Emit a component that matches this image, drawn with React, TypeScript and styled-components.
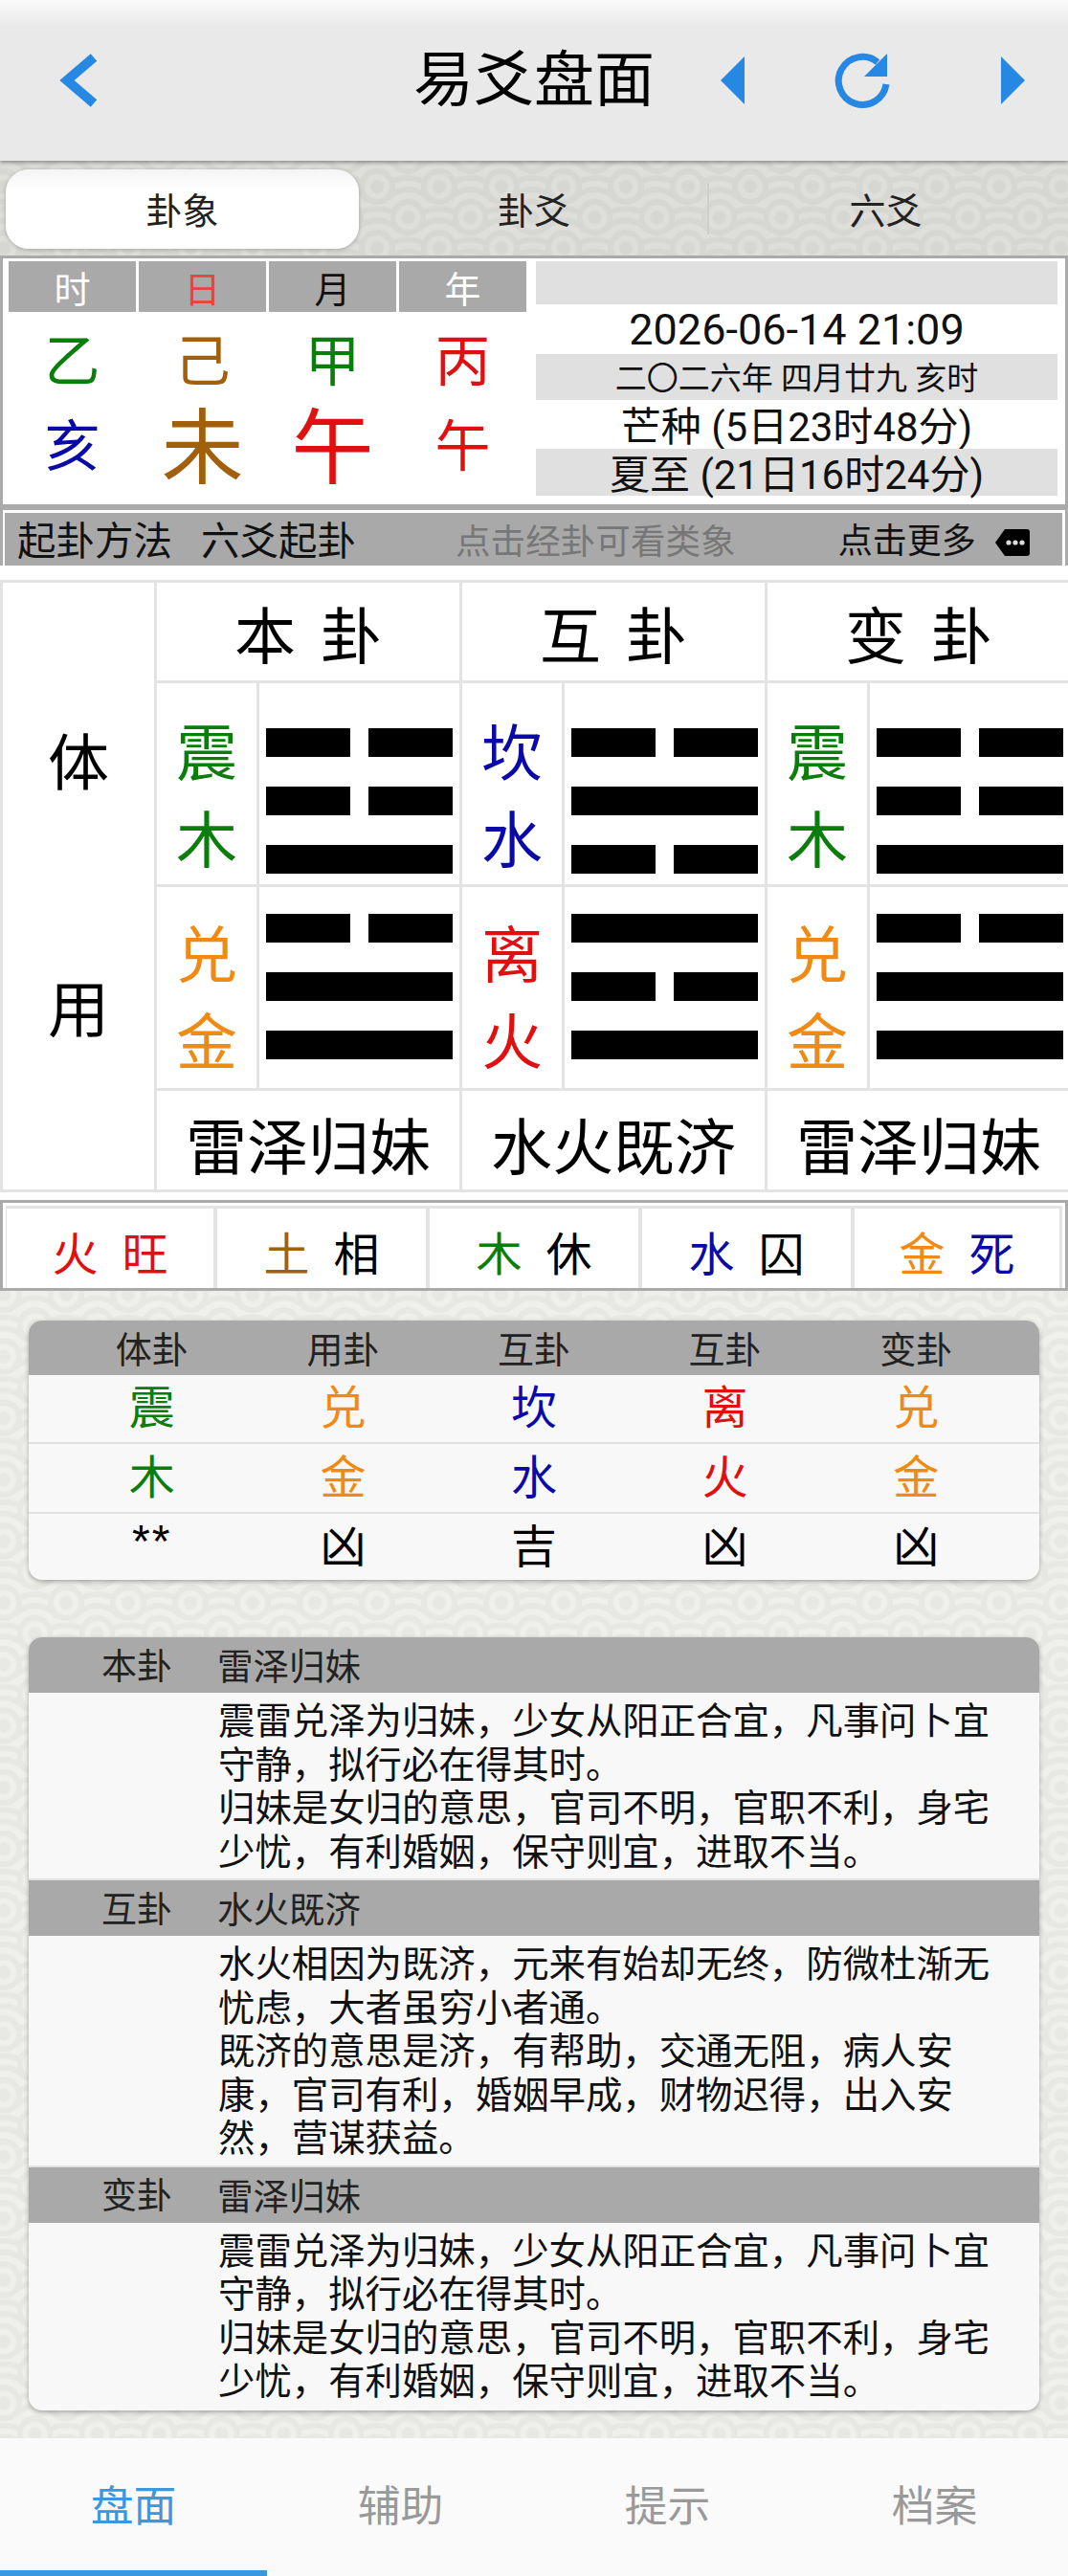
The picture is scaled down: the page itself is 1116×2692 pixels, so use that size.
import React from "react";
import styled, { createGlobalStyle } from "styled-components";

const Global = createGlobalStyle`
  html, body { margin: 0; padding: 0; background: #fff; }
  * { box-sizing: border-box; }
`;

const C = { wood: "#0a7d0a", fire: "#e01010", earth: "#a3600c", metal: "#ef8a14", water: "#0a0aa8", ink: "#000" };
const SANS = `Roboto, "Noto Sans CJK SC", sans-serif`;
const GREY = "#a9a9a9";
const LINE = "#e3e3e3";

/* wave backdrop: one tile, every ring set that reaches into it, computed once */
const TILE_W = 65;
const TILE_H = 64.35;
const DARK = "#e7e7e3";
const LIGHT = "#efefeb";
const ring = (cx: number, cy: number, stops: number[]) => {
  const parts: string[] = [];
  let from = 0;
  stops.forEach((to, i) => {
    const col = i % 2 === 0 ? DARK : LIGHT;
    parts.push(`${col} ${from === 0 ? 0 : from + 1}px`, `${col} ${to - 1}px`);
    from = to;
  });
  const last = i2c(stops.length - 1);
  parts.push(`${last} ${from}px`, `transparent ${from}px`);
  return `radial-gradient(circle at ${cx}px ${cy}px, ${parts.join(", ")})`;
};
function i2c(i: number) {
  return i % 2 === 0 ? DARK : LIGHT;
}
const buildWaves = () => {
  const layers: string[] = [];
  const core = [7, 13, 19];
  const fan = [7, 13, 19, 26, 32, 38, 44, 50];
  const A = [4, 2];
  const B = [36.5, 34.2];
  for (let row = -1; row <= 2; row++) {
    for (let col = -1; col <= 1; col++) {
      layers.push(ring(A[0] + col * TILE_W, A[1] + row * TILE_H, core));
      layers.push(ring(B[0] + col * TILE_W, B[1] + row * TILE_H, core));
    }
  }
  for (let step = 8; step >= -4; step--) {
    const odd = Math.abs(step) % 2 === 1;
    const y = (odd ? B[1] : A[1]) + ((step - (odd ? 1 : 0)) / 2) * TILE_H;
    for (let col = -1; col <= 2; col++) {
      const x = (odd ? B[0] : A[0]) + col * TILE_W;
      layers.push(ring(x, y, fan));
    }
  }
  return layers.join(",\n");
};
const WAVES = buildWaves();

const Page = styled.div`
  width: 1116px;
  height: 2692px;
  overflow: hidden;
  display: flex;
  flex-direction: column;
  font-family: ${SANS};
  color: #000;
  background-color: ${DARK};
  background-image: ${WAVES};
  background-size: ${TILE_W}px ${TILE_H}px;
`;

/* ---------- header ---------- */
const Header = styled.header`
  flex: none;
  height: 168px;
  display: flex;
  align-items: center;
  background: linear-gradient(#fafafa 0, #e9e9e9 28px);
  box-shadow: 0 2px 4px rgba(0, 0, 0, 0.35);
  position: relative;
  z-index: 2;
`;
const HeaderIcon = styled.svg<{ $ml: number }>`
  flex: none;
  margin-left: ${(p) => p.$ml}px;
  display: block;
`;
const Title = styled.h1`
  flex: none;
  width: 252px;
  margin: 0 0 0 327px;
  font-size: 63px;
  line-height: 70px;
  font-weight: 400;
  text-align: center;
  white-space: nowrap;
`;

/* ---------- tabs ---------- */
const Tabs = styled.nav`
  flex: none;
  height: 99px;
  padding: 9px 6px 7px;
  display: grid;
  grid-template-columns: 369px 366px 369px;
  background: rgba(0, 0, 0, 0.07);
`;
const Tab = styled.div<{ $active?: boolean; $divider?: boolean }>`
  position: relative;
  display: flex;
  align-items: center;
  justify-content: center;
  padding-bottom: 2px;
  font-size: 38px;
  color: #222;
  border-radius: 24px;
  background: ${(p) => (p.$active ? "linear-gradient(#f4f4f4, #fff 22px)" : "transparent")};
  box-shadow: ${(p) => (p.$active ? "0 1px 4px rgba(0,0,0,.25)" : "none")};
  &::after {
    content: "";
    display: ${(p) => (p.$divider ? "block" : "none")};
    position: absolute;
    right: 0;
    top: 14px;
    bottom: 15px;
    width: 2px;
    background: #cfcecb;
  }
`;

/* ---------- calendar ---------- */
const WhitePanel = styled.div`
  flex: none;
  background: #fff;
`;
const Calendar = styled.section`
  height: 263px;
  border: 3px solid #aaa;
  padding: 3px 8px 0 6px;
  display: flex;
  gap: 9px;
`;
const Pillars = styled.div`
  flex: none;
  display: grid;
  grid-template-columns: repeat(4, 133px);
  grid-template-rows: 53px 104px 74px;
  column-gap: 3px;
  width: 542px;
`;
const PillarHead = styled.div<{ $color: string }>`
  background: ${GREY};
  color: ${(p) => p.$color};
  display: flex;
  align-items: center;
  justify-content: center;
  font-size: 38px;
`;
const Ganzhi = styled.div<{ $color: string; $big?: boolean }>`
  display: flex;
  align-items: center;
  justify-content: center;
  padding-top: ${(p) => (p.$big ? 6 : 0)}px;
  color: ${(p) => p.$color};
  font-size: ${(p) => (p.$big ? 86 : 58)}px;
  line-height: 1;
`;
const DateCol = styled.div`
  flex: 1;
  display: flex;
  flex-direction: column;
`;
const DateRow = styled.div<{ $h: number; $shade?: boolean; $size: number; $pb?: number }>`
  height: ${(p) => p.$h}px;
  padding-bottom: ${(p) => p.$pb ?? 0}px;
  background: ${(p) => (p.$shade ? "#e0e0e0" : "transparent")};
  font-size: ${(p) => p.$size}px;
  display: flex;
  align-items: center;
  justify-content: center;
  white-space: nowrap;
  color: #111;
`;

/* ---------- method bar ---------- */
const Bar = styled.div`
  height: 61px;
  border: 3px solid #aaa;
  border-bottom: 0;
  padding: 3px 3px 0 2px;
`;
const BarInner = styled.div`
  height: 55px;
  padding-top: 6px;
  background: ${GREY};
  display: flex;
  align-items: center;
  white-space: nowrap;
  overflow: hidden;
`;
const BarText = styled.span<{ $ml: number; $size: number; $muted?: boolean }>`
  margin-left: ${(p) => p.$ml}px;
  font-size: ${(p) => p.$size}px;
  color: ${(p) => (p.$muted ? "#777" : "#111")};
  line-height: 49px;
`;
const MoreIcon = styled.svg`
  margin-left: 20px;
  flex: none;
`;

/* ---------- hexagram table ---------- */
const HexTable = styled.section`
  margin-top: 15px;
  height: 640px;
  width: 1122px;
  display: flex;
  border: 3px solid ${LINE};
  border-right: 0;
`;
const SideCol = styled.div`
  flex: none;
  width: 158px;
  padding-top: 4px;
  display: flex;
  flex-direction: column;
  align-items: center;
  justify-content: center;
  gap: 194px;
  font-size: 64px;
  line-height: 64px;
`;
const HexCol = styled.div`
  flex: none;
  width: 319px;
  border-left: 3px solid ${LINE};
  display: flex;
  flex-direction: column;
`;
const HexTitle = styled.div`
  flex: none;
  height: 105px;
  display: flex;
  align-items: center;
  justify-content: center;
  font-size: 64px;
  word-spacing: 10px;
  border-bottom: 3px solid ${LINE};
`;
const TrigramRow = styled.div`
  flex: none;
  height: 213px;
  display: flex;
  border-bottom: 3px solid ${LINE};
`;
const TrigramName = styled.div<{ $pt: number }>`
  flex: none;
  width: 107px;
  padding-top: ${(p) => p.$pt}px;
  border-right: 3px solid ${LINE};
  display: flex;
  flex-direction: column;
  align-items: center;
  font-size: 64px;
  line-height: 91px;
`;
const TrigramLines = styled.div<{ $pt: number }>`
  padding: ${(p) => p.$pt}px 0 0 7px;
  display: flex;
  flex-direction: column;
  gap: 31px;
`;
const Yao = styled.div<{ $broken: boolean }>`
  width: 195px;
  height: 30px;
  display: flex;
  justify-content: space-between;
  background: ${(p) => (p.$broken ? "transparent" : "#000")};
`;
const YaoPart = styled.i`
  width: 88px;
  background: #000;
`;
const HexName = styled.div`
  flex: 1;
  padding-top: 5px;
  display: flex;
  align-items: center;
  justify-content: center;
  font-size: 64px;
  white-space: nowrap;
`;

/* ---------- wang-shuai row ---------- */
const WangRow = styled.section`
  margin-top: 8px;
  height: 95px;
  border: 3px solid #aaa;
  padding: 3px 3px 0;
  display: grid;
  grid-template-columns: 220px repeat(3, 222px) 1fr;
`;
const WangCell = styled.div`
  display: flex;
  align-items: center;
  justify-content: center;
  gap: 25px;
  padding-top: 5px;
  font-size: 48px;
  border-top: 3px solid ${LINE};
  border-right: 3px solid ${LINE};
  border-left: 1px solid ${LINE};
`;
const Tone = styled.span<{ $color: string }>`
  color: ${(p) => p.$color};
`;

/* ---------- cards ---------- */
const Card = styled.section<{ $mt: number }>`
  flex: none;
  margin: ${(p) => p.$mt}px 30px 0;
  background: #f8f8f8;
  border-radius: 14px;
  overflow: hidden;
  box-shadow: 0 2px 5px rgba(0, 0, 0, 0.3);
`;
const SummaryHead = styled.div`
  height: 57px;
  background: ${GREY};
  padding: 0 29px 6px;
  display: grid;
  grid-template-columns: repeat(5, 1fr);
  align-items: center;
  text-align: center;
  font-size: 38px;
  color: #222;
`;
const SummaryRow = styled.div<{ $h: number; $line?: boolean }>`
  height: ${(p) => p.$h}px;
  padding: 0 29px;
  display: grid;
  grid-template-columns: repeat(5, 1fr);
  align-items: center;
  text-align: center;
  font-size: 48px;
  line-height: 60px;
  border-bottom: ${(p) => (p.$line ? "2px solid #e2e2e2" : "0")};
`;
const Stars = styled.span`
  font-family: "Liberation Sans", sans-serif;
  letter-spacing: 2px;
  position: relative;
  top: -6px;
`;
const InfoHead = styled.div`
  height: 58px;
  padding-bottom: 5px;
  background: ${GREY};
  display: grid;
  grid-template-columns: 150px 1fr;
  column-gap: 47px;
  align-items: center;
  font-size: 37.5px;
  color: #222;
`;
const InfoLabel = styled.span`
  text-align: right;
  font-size: 37px;
`;
const InfoBody = styled.div`
  padding: 7px 44px 5px 198px;
  font-size: 38.4px;
  line-height: 45.5px;
  color: #111;
  border-bottom: 2px solid #e2e2e2;
  &:last-child {
    border-bottom: 0;
    padding-bottom: 7px;
  }
`;

/* ---------- footer ---------- */
const Footer = styled.footer`
  margin-top: auto;
  flex: none;
  height: 144px;
  background: #fafafa;
  display: grid;
  grid-template-columns: repeat(4, 1fr);
`;
const FootTab = styled.div<{ $active?: boolean }>`
  display: flex;
  align-items: center;
  justify-content: center;
  padding-bottom: 4px;
  font-size: 44.8px;
  color: ${(p) => (p.$active ? "#3a98e0" : "#999")};
  border-bottom: 6px solid ${(p) => (p.$active ? "#3a98e0" : "transparent")};
`;

/* ---------- data ---------- */
const pillarHeads: [string, string][] = [["时", "#fff"], ["日", "#e8433f"], ["月", "#111"], ["年", "#fff"]];
const stems: [string, string][] = [["乙", C.wood], ["己", C.earth], ["甲", C.wood], ["丙", C.fire]];
const branches: [string, string, boolean][] = [["亥", C.water, false], ["未", C.earth, true], ["午", C.fire, true], ["午", C.fire, false]];

type Tri = { n: string; e: string; c: string; lines: boolean[] };
const zhen: Tri = { n: "震", e: "木", c: C.wood, lines: [true, true, false] };
const dui: Tri = { n: "兑", e: "金", c: C.metal, lines: [true, false, false] };
const kan: Tri = { n: "坎", e: "水", c: C.water, lines: [true, false, true] };
const li: Tri = { n: "离", e: "火", c: C.fire, lines: [false, true, false] };

const hexes = [
  { title: "本 卦", up: zhen, down: dui, name: "雷泽归妹" },
  { title: "互 卦", up: kan, down: li, name: "水火既济" },
  { title: "变 卦", up: zhen, down: dui, name: "雷泽归妹" },
];

const wang: [string, string, string, string][] = [
  ["火", C.fire, "旺", C.fire],
  ["土", C.earth, "相", C.ink],
  ["木", C.wood, "休", C.ink],
  ["水", C.water, "囚", C.ink],
  ["金", C.metal, "死", C.water],
];

const summary = [
  { head: "体卦", a: "震", ac: C.wood, b: "木", bc: C.wood, r: "**" },
  { head: "用卦", a: "兑", ac: C.metal, b: "金", bc: C.metal, r: "凶" },
  { head: "互卦", a: "坎", ac: C.water, b: "水", bc: C.water, r: "吉" },
  { head: "互卦", a: "离", ac: C.fire, b: "火", bc: C.fire, r: "凶" },
  { head: "变卦", a: "兑", ac: C.metal, b: "金", bc: C.metal, r: "凶" },
];

const guiMei = ["震雷兑泽为归妹，少女从阳正合宜，凡事问卜宜守静，拟行必在得其时。", "归妹是女归的意思，官司不明，官职不利，身宅少忧，有利婚姻，保守则宜，进取不当。"];
const info = [
  { label: "本卦", name: "雷泽归妹", text: guiMei },
  {
    label: "互卦",
    name: "水火既济",
    text: ["水火相因为既济，元来有始却无终，防微杜渐无忧虑，大者虽穷小者通。", "既济的意思是济，有帮助，交通无阻，病人安康，官司有利，婚姻早成，财物迟得，出入安然，营谋获益。"],
  },
  { label: "变卦", name: "雷泽归妹", text: guiMei },
];

const BLUE = "#2688e3";

const Trigram = ({ t, namePt, linePt }: { t: Tri; namePt: number; linePt: number }) => (
  <TrigramRow>
    <TrigramName $pt={namePt} style={{ color: t.c }}>
      <span>{t.n}</span>
      <span>{t.e}</span>
    </TrigramName>
    <TrigramLines $pt={linePt}>
      {t.lines.map((broken, i) => (
        <Yao key={i} $broken={broken}>
          {broken && <YaoPart />}
          {broken && <YaoPart />}
        </Yao>
      ))}
    </TrigramLines>
  </TrigramRow>
);

export default function App() {
  return (
    <Page>
      <Global />
      <Header>
        <HeaderIcon $ml={60} width="45" height="60" viewBox="0 0 45 60">
          <path d="M38 6 L10 30 L38 54" fill="none" stroke={BLUE} strokeWidth="10" strokeLinejoin="miter" />
        </HeaderIcon>
        <Title>易爻盘面</Title>
        <HeaderIcon $ml={69} width="26" height="50" viewBox="0 0 26 50">
          <path d="M25 0 V50 L0 25 Z" fill={BLUE} />
        </HeaderIcon>
        <HeaderIcon $ml={91} width="60" height="60" viewBox="0 0 60 60">
          <path d="M56 34 A25 25 0 1 1 47 11" fill="none" stroke={BLUE} strokeWidth="7" />
          <path d="M57 2 V26 H33 Z" fill={BLUE} />
        </HeaderIcon>
        <HeaderIcon $ml={115} width="26" height="50" viewBox="0 0 26 50">
          <path d="M1 0 V50 L26 25 Z" fill={BLUE} />
        </HeaderIcon>
      </Header>

      <Tabs>
        <Tab $active>卦象</Tab>
        <Tab $divider>卦爻</Tab>
        <Tab>六爻</Tab>
      </Tabs>

      <WhitePanel>
        <Calendar>
          <Pillars>
            {pillarHeads.map(([t, c]) => (
              <PillarHead key={t} $color={c}>{t}</PillarHead>
            ))}
            {stems.map(([t, c]) => (
              <Ganzhi key={t} $color={c}>{t}</Ganzhi>
            ))}
            {branches.map(([t, c, big], i) => (
              <Ganzhi key={i} $color={c} $big={big}>{t}</Ganzhi>
            ))}
          </Pillars>
          <DateCol>
            <DateRow $h={45} $size={38} $shade />
            <DateRow $h={52} $size={45}>2026-06-14 21:09</DateRow>
            <DateRow $h={48} $shade $size={33} $pb={3}>二〇二六年 四月廿九 亥时</DateRow>
            <DateRow $h={51} $size={42} $pb={2}>芒种 (5日23时48分)</DateRow>
            <DateRow $h={49} $shade $size={42} $pb={2}>夏至 (21日16时24分)</DateRow>
          </DateCol>
        </Calendar>

        <Bar>
          <BarInner>
            <BarText $ml={13} $size={40.5}>起卦方法</BarText>
            <BarText $ml={30} $size={40.5}>六爻起卦</BarText>
            <BarText $ml={104} $size={36.6} $muted>点击经卦可看类象</BarText>
            <BarText $ml={107} $size={36}>点击更多</BarText>
            <MoreIcon width="36" height="28" viewBox="0 0 36 28">
              <path d="M10 0 H33 Q36 0 36 3 V25 Q36 28 33 28 H10 L0 14 Z" fill="#000" />
              <circle cx="14" cy="14" r="2.6" fill="#ddd" />
              <circle cx="21" cy="14" r="2.6" fill="#ddd" />
              <circle cx="28" cy="14" r="2.6" fill="#ddd" />
            </MoreIcon>
          </BarInner>
        </Bar>

        <HexTable>
          <SideCol>
            <span>体</span>
            <span>用</span>
          </SideCol>
          {hexes.map((h) => (
            <HexCol key={h.title}>
              <HexTitle>{h.title}</HexTitle>
              <Trigram t={h.up} namePt={29} linePt={47} />
              <Trigram t={h.down} namePt={27} linePt={28} />
              <HexName>{h.name}</HexName>
            </HexCol>
          ))}
        </HexTable>

        <WangRow>
          {wang.map(([a, ac, b, bc]) => (
            <WangCell key={a}>
              <Tone $color={ac}>{a}</Tone>
              <Tone $color={bc}>{b}</Tone>
            </WangCell>
          ))}
        </WangRow>
      </WhitePanel>

      <Card $mt={31}>
        <SummaryHead>
          {summary.map((s, i) => (
            <span key={i}>{s.head}</span>
          ))}
        </SummaryHead>
        <SummaryRow $h={72} $line>
          {summary.map((s, i) => (
            <Tone key={i} $color={s.ac}>{s.a}</Tone>
          ))}
        </SummaryRow>
        <SummaryRow $h={73} $line>
          {summary.map((s, i) => (
            <Tone key={i} $color={s.bc}>{s.b}</Tone>
          ))}
        </SummaryRow>
        <SummaryRow $h={69}>
          {summary.map((s, i) => (s.r === "**" ? <Stars key={i}>{s.r}</Stars> : <span key={i}>{s.r}</span>))}
        </SummaryRow>
      </Card>

      <Card $mt={60}>
        {info.map((it) => (
          <React.Fragment key={it.label}>
            <InfoHead>
              <InfoLabel>{it.label}</InfoLabel>
              <span>{it.name}</span>
            </InfoHead>
            <InfoBody>
              {it.text.map((p) => (
                <div key={p}>{p}</div>
              ))}
            </InfoBody>
          </React.Fragment>
        ))}
      </Card>

      <Footer>
        <FootTab $active>盘面</FootTab>
        <FootTab>辅助</FootTab>
        <FootTab>提示</FootTab>
        <FootTab>档案</FootTab>
      </Footer>
    </Page>
  );
}
